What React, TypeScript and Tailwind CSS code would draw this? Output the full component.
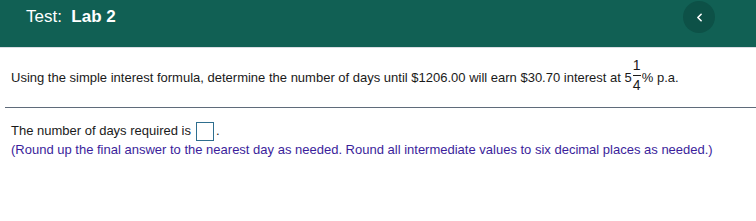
import { ChevronLeft } from 'lucide-react';

export default function App() {
  return (
    <div className="w-[756px] h-[221px] bg-white font-['Liberation_Sans',Arial,sans-serif] text-[#1a1a1a]">
      {/* Header */}
      <header className="h-[48px] bg-[#116054] flex items-start justify-between border-b border-[#d9dde3]">
        <h1 className="pl-[26px] pt-[5px] text-[17px] text-white leading-[24px]">
          Test:&nbsp; <span className="font-bold">Lab 2</span>
        </h1>
        <button className="mr-[41px] mt-[1px] w-[32px] h-[32px] rounded-full bg-[#0d5147] flex items-center justify-center">
          <ChevronLeft size={13} strokeWidth={3} className="text-white" />
        </button>
      </header>

      {/* Question */}
      <div className="pl-[11px] h-[59px] text-[13px] flex items-center">
        <span>
          Using the simple interest formula, determine the number of days until $1206.00 will earn $30.70 interest at 5
        </span>
        <span className="inline-flex flex-col items-center mx-[1px] mb-[4px] text-[14px] leading-[15px]">
          <span>1</span>
          <span className="w-[8px] h-px my-[2px] bg-[#1a1a1a]" />
          <span>4</span>
        </span>
        <span>% p.a.</span>
      </div>

      <div className="ml-[5px] h-px bg-[#5f6b7a]" />

      {/* Answer */}
      <div className="pl-[11px] pt-[13px] text-[13px]">
        <div className="flex items-center h-[20px]">
          <span>The number of days required is</span>
          <span className="ml-[5px] w-[18px] h-[19px] border border-[#2e6e8e] inline-block" />
          <span className="ml-[2px]">.</span>
        </div>
        <div className="text-[#3b1e9b] leading-[18px]">
          (Round up the final answer to the nearest day as needed. Round all intermediate values to six decimal places as needed.)
        </div>
      </div>
    </div>
  );
}
